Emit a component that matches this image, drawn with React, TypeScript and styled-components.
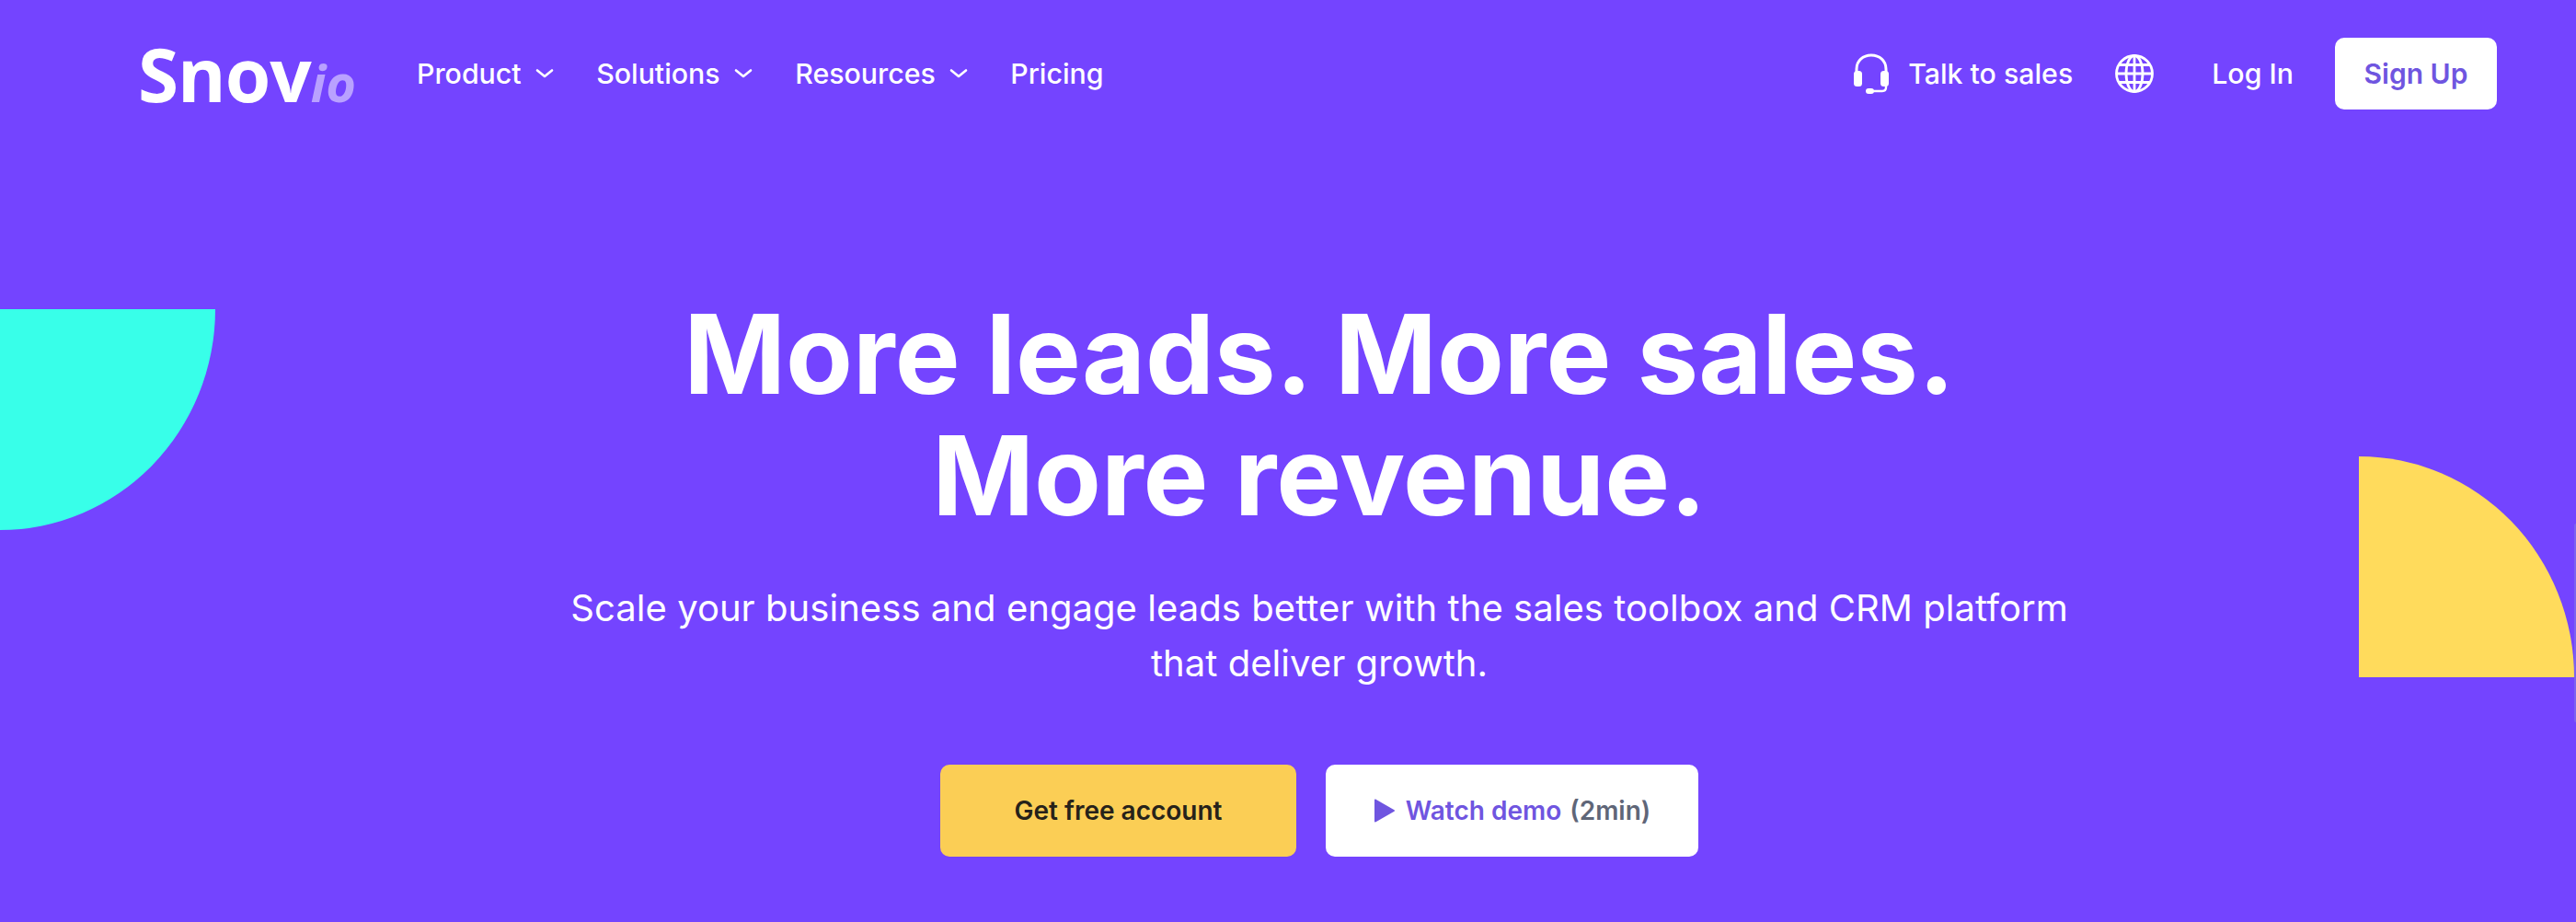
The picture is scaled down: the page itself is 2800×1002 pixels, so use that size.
import React from 'react';
import styled, { createGlobalStyle } from 'styled-components';

const GlobalStyle = createGlobalStyle`
	html,
	body {
		margin: 0;
		padding: 0;
		background: #7444ff;
		font-family: Inter, 'Liberation Sans', sans-serif;
	}
`;

const Page = styled.div`
	position: relative;
	width: 2800px;
	height: 1002px;
	overflow: hidden;
	background: #7444ff;
	color: #fff;
`;

const Header = styled.header`
	display: flex;
	align-items: center;
	justify-content: space-between;
	height: 159px;
	padding: 0 86px 1px 150px;
`;

const Left = styled.div`
	display: flex;
	align-items: center;
`;

const Logo = styled.a`
	display: flex;
	align-items: baseline;
	width: 303px;
	font-family: 'Open Sans', sans-serif;
	font-size: 80px;
	line-height: 1;
	font-weight: 700;
	letter-spacing: -1px;
	color: #fff;
`;

const LogoSuffix = styled.span`
	font-size: 56px;
	font-style: italic;
	font-weight: 700;
	letter-spacing: 0;
	color: #b9a1ff;
`;

const Nav = styled.nav`
	display: flex;
	align-items: center;
	gap: 46.5px;
`;

const NavItem = styled.a`
	display: flex;
	align-items: center;
	gap: 15px;
	font-size: 30.3px;
	font-weight: 500;
	color: #fff;
`;

const Right = styled.div`
	display: flex;
	align-items: center;
`;

const TalkLink = styled.a`
	display: flex;
	align-items: center;
	gap: 21px;
	margin-right: 46px;
	font-size: 30.3px;
	font-weight: 500;
	color: #fff;
`;

const LoginLink = styled.a`
	margin: 0 45px 0 63px;
	font-size: 30.3px;
	font-weight: 500;
	color: #fff;
`;

const SignUp = styled.a`
	display: flex;
	align-items: center;
	justify-content: center;
	width: 176px;
	height: 78px;
	border-radius: 10px;
	background: #fff;
	font-size: 30px;
	font-weight: 600;
	color: #6f55e0;
`;

const Hero = styled.section`
	display: flex;
	flex-direction: column;
	align-items: center;
	padding: 159px 0 0 68px;
	text-align: center;
`;

const Title = styled.h1`
	margin: 0;
	font-size: 119px;
	line-height: 132px;
	font-weight: 700;
	color: #fff;
`;

const Subtitle = styled.p`
	width: 1660px;
	margin: 48px 0 0;
	font-size: 40px;
	line-height: 60px;
	font-weight: 400;
	letter-spacing: 0.05px;
	color: #fff;
`;

const Actions = styled.div`
	display: flex;
	gap: 32px;
	margin-top: 80px;
`;

const ActionButton = styled.a<{ $primary?: boolean }>`
	display: flex;
	align-items: center;
	justify-content: center;
	height: 100px;
	width: ${(p) => (p.$primary ? '387px' : '405px')};
	border-radius: 10px;
	background: ${(p) => (p.$primary ? '#fbce55' : '#fff')};
	font-size: 28px;
	font-weight: 600;
	color: ${(p) => (p.$primary ? '#26221a' : '#6f55e0')};
`;

const PlayIcon = styled.svg`
	flex: none;
	margin-right: 11px;
`;

const Duration = styled.span`
	margin-left: 9px;
	color: #5f6678;
`;

const TealShape = styled.div`
	position: absolute;
	left: 0;
	top: 336px;
	width: 234px;
	height: 240px;
	background: #38ffe9;
	border-bottom-right-radius: 234px 240px;
`;

const YellowShape = styled.div`
	position: absolute;
	left: 2564px;
	top: 496px;
	width: 234px;
	height: 240px;
	background: #ffdb5c;
	border-top-right-radius: 234px 240px;
`;

const EdgeTab = styled.div`
	position: absolute;
	right: 0;
	top: 569px;
	width: 2px;
	height: 216px;
	border-radius: 2px 0 0 2px;
	background: #7d62f0;
`;

const Chevron = () => (
	<svg width="20" height="12" viewBox="0 0 20 12" fill="none" stroke="#fff" strokeWidth="2.6" strokeLinecap="round" strokeLinejoin="round">
		<path d="M2 2.500l8 6.500 8-6.500" />
	</svg>
);

const Headset = () => (
	<svg width="38" height="44" viewBox="0 0 38 44" fill="none" stroke="#fff" strokeWidth="3" strokeLinecap="round">
		<path d="M3 20v-3C3 8 10 2 19 2s16 6 16 15v3" />
		<path d="M35 36v1c0 3-2 4-4 4H18" strokeWidth="2.400" />
		<rect x="0" y="19" width="9" height="17" rx="3.500" fill="#fff" stroke="none" />
		<rect x="29" y="19" width="9" height="17" rx="3.500" fill="#fff" stroke="none" />
		<rect x="13" y="38" width="9" height="6" rx="3" fill="#fff" stroke="none" />
	</svg>
);

const Globe = () => (
	<svg width="42" height="42" viewBox="0 0 42 42" fill="none" stroke="#fff" strokeWidth="2.8">
		<circle cx="21" cy="21" r="19.500" />
		<ellipse cx="21" cy="21" rx="9" ry="19.500" />
		<path d="M21 2v38M2 21h38M5 11.500h32M5 30.500h32" />
	</svg>
);

export default function App() {
	return (
		<Page>
			<GlobalStyle />
			<TealShape />
			<YellowShape />
			<EdgeTab />
			<Header>
				<Left>
					<Logo>
						Snov<LogoSuffix>io</LogoSuffix>
					</Logo>
					<Nav>
						<NavItem>
							Product <Chevron />
						</NavItem>
						<NavItem>
							Solutions <Chevron />
						</NavItem>
						<NavItem>
							Resources <Chevron />
						</NavItem>
						<NavItem>Pricing</NavItem>
					</Nav>
				</Left>
				<Right>
					<TalkLink>
						<Headset />
						Talk to sales
					</TalkLink>
					<Globe />
					<LoginLink>Log In</LoginLink>
					<SignUp>Sign Up</SignUp>
				</Right>
			</Header>
			<Hero>
				<Title>
					More leads. More sales.
					<br />
					More revenue.
				</Title>
				<Subtitle>Scale your business and engage leads better with the sales toolbox and CRM platform that deliver growth.</Subtitle>
				<Actions>
					<ActionButton $primary>Get free account</ActionButton>
					<ActionButton>
						<PlayIcon width="24" height="26" viewBox="0 0 24 26">
							<path d="M1 1.500v23c0 .8.8 1.200 1.500.8l20-11.500c.6-.4.6-1.200 0-1.600L2.500.7C1.800.3 1 .7 1 1.500z" fill="#6f55e0" />
						</PlayIcon>
						Watch demo<Duration>(2min)</Duration>
					</ActionButton>
				</Actions>
			</Hero>
		</Page>
	);
}
